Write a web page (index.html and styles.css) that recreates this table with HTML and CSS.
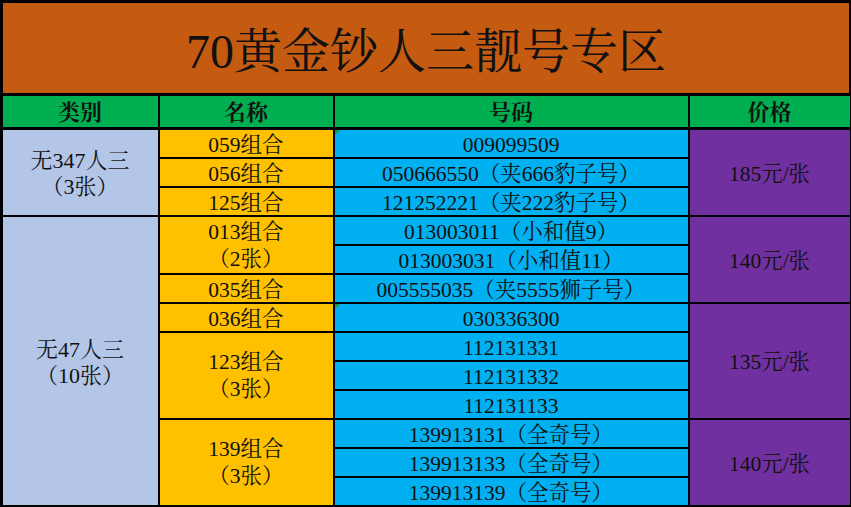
FILE: index.html
```html
<!DOCTYPE html>
<html lang="zh">
<head>
<meta charset="utf-8">
<title>70黄金钞人三靓号专区</title>
<link rel="stylesheet" href="styles.css">
</head>
<body>
<table class="sheet">
  <colgroup>
    <col class="c-type">
    <col class="c-name">
    <col class="c-num">
    <col class="c-price">
  </colgroup>
  <tr class="r-title"><td colspan="4" class="title">70黄金钞人三靓号专区</td></tr>
  <tr class="r-head">
    <th>类别</th><th>名称</th><th>号码</th><th>价格</th>
  </tr>
  <tr class="r">
    <td rowspan="3" class="type">无347人三<br>（3张）</td>
    <td class="name">059组合</td>
    <td class="num mark">009099509</td>
    <td rowspan="3" class="price">185元/张</td>
  </tr>
  <tr class="r"><td class="name">056组合</td><td class="num">050666550（夹666豹子号）</td></tr>
  <tr class="r"><td class="name">125组合</td><td class="num">121252221（夹222豹子号）</td></tr>
  <tr class="r">
    <td rowspan="10" class="type">无47人三<br>（10张）</td>
    <td rowspan="2" class="name">013组合<br>（2张）</td>
    <td class="num">013003011（小和值9）</td>
    <td rowspan="3" class="price">140元/张</td>
  </tr>
  <tr class="r"><td class="num">013003031（小和值11）</td></tr>
  <tr class="r"><td class="name">035组合</td><td class="num">005555035（夹5555狮子号）</td></tr>
  <tr class="r">
    <td class="name">036组合</td>
    <td class="num mark">030336300</td>
    <td rowspan="4" class="price">135元/张</td>
  </tr>
  <tr class="r"><td rowspan="3" class="name">123组合<br>（3张）</td><td class="num">112131331</td></tr>
  <tr class="r"><td class="num">112131332</td></tr>
  <tr class="r"><td class="num">112131133</td></tr>
  <tr class="r">
    <td rowspan="3" class="name">139组合<br>（3张）</td>
    <td class="num">139913131（全奇号）</td>
    <td rowspan="3" class="price">140元/张</td>
  </tr>
  <tr class="r"><td class="num">139913133（全奇号）</td></tr>
  <tr class="r"><td class="num">139913139（全奇号）</td></tr>
</table>
</body>
</html>
```
FILE: styles.css
```css
html, body {
  margin: 0;
  padding: 0;
  background: #000;
}
.sheet {
  width: 851px;
  border-collapse: collapse;
  table-layout: fixed;
  font-family: "Liberation Serif", "Noto Serif CJK SC", "Noto Sans CJK SC", serif;
  color: #111;
  font-size: 21.5px;
}
.c-type { width: 157px; }
.c-name { width: 175px; }
.c-num { width: 355px; }
.c-price { width: 162px; }
.sheet td, .sheet th {
  border: 2px solid #000;
  padding: 0;
  text-align: center;
  vertical-align: middle;
  line-height: 20px;
}
.sheet .r-title { height: 93px; }
.sheet .r-head { height: 34px; }
.sheet .r { height: 29px; }
.sheet .title {
  background: #C55A11;
  font-size: 48px;
  line-height: 50px;
  padding-top: 8px;
  border-width: 3px;
}
.r-head th {
  background: #00B050;
  font-size: 22px;
  font-weight: bold;
  line-height: 24px;
  padding-top: 2px;
  border-top-width: 3px;
  border-bottom-width: 3px;
}
.sheet td.type { background: #B4C6E7; font-size: 22px; line-height: 26px; padding-top: 4px; }
.sheet td.name { background: #FFC000; line-height: 20px; padding-top: 3px; }
.sheet td[rowspan].name { line-height: 27px; padding-top: 2px; }
.sheet td.num { background: #00B0F0; position: relative; padding-top: 3px; }
.sheet td.price { background: #7030A0; padding-top: 3px; }
.mark::before {
  content: "";
  position: absolute;
  left: 0;
  top: 0;
  border-style: solid;
  border-width: 5px 5px 0 0;
  border-color: #1a9a3a transparent transparent transparent;
}
```
